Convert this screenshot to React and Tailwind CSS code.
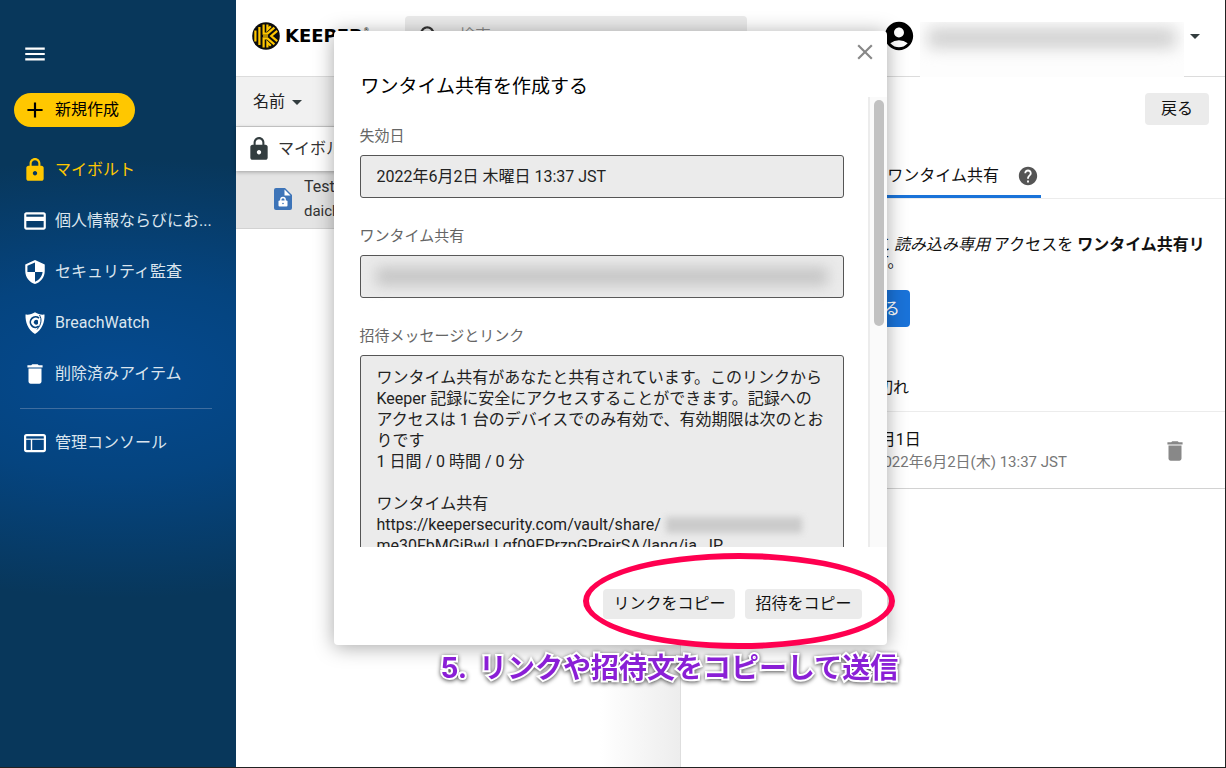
import React, { useState } from 'react';
import {
  MdAccountCircle,
  MdAdd,
  MdArrowDropDown,
  MdClose,
  MdCreditCard,
  MdDelete,
  MdHelp,
  MdLock,
  MdMenu,
  MdSearch,
  MdSecurity,
} from 'react-icons/md';

const MESSAGE = `ワンタイム共有があなたと共有されています。このリンクから
Keeper 記録に安全にアクセスすることができます。記録への
アクセスは 1 台のデバイスでのみ有効で、有効期限は次のとお
りです
1 日間 / 0 時間 / 0 分

ワンタイム共有
https://keepersecurity.com/vault/share/
me30FbMGjBwLLgf09EPrzpGPrejrSA/lang/ja_JP`;

const BreachWatchIcon = () => (
  <svg width="26" height="26" viewBox="0 0 26 26" aria-hidden="true">
    <path d="M3.5 4.5C7 5 10 4 13 2.2C16 4 19 5 22.5 4.5C22.8 12.5 20 19.5 13 24C6 19.5 3.2 12.5 3.5 4.5Z" fill="white" />
    <path d="M17 8.2A5.2 5.2 0 1 0 16.8 16.2" fill="none" stroke="#05437f" strokeWidth="1.7" />
    <path d="M17.5 5C20 9 19.5 14.5 15 19.5" fill="none" stroke="#05437f" strokeWidth="1" />
    <path d="M16 10.6A2.4 2.4 0 1 0 16 13.8" fill="#05437f" />
  </svg>
);

const ConsoleIcon = () => (
  <svg width="26" height="26" viewBox="0 0 26 26" fill="none" stroke="white" aria-hidden="true">
    <rect x="3.1" y="5.1" width="19.8" height="16" rx="1.5" strokeWidth="2.2" />
    <path d="M3 9.2H23" strokeWidth="1.2" />
    <path d="M9.5 9.2V21" strokeWidth="1.4" />
  </svg>
);

const FileLockIcon = () => (
  <svg width="18" height="22" viewBox="0 0 18 22" aria-hidden="true">
    <path d="M2 0H11L18 7V20A2 2 0 0 1 16 22H2A2 2 0 0 1 0 20V2A2 2 0 0 1 2 0Z" fill="#3d74b8" />
    <path d="M10.5 1.5V7.5H16.5Z" fill="white" />
    <rect x="4.5" y="12.5" width="9" height="6" rx="1" fill="white" />
    <path d="M6.8 13V11.7A2.2 2.2 0 0 1 11.2 11.7V13" fill="none" stroke="white" strokeWidth="1.3" />
    <circle cx="9" cy="15.5" r="0.8" fill="#3d74b8" />
  </svg>
);

const KeeperMark = () => (
  <svg width="28" height="28" viewBox="0 0 28 28" aria-hidden="true">
    <circle cx="14" cy="14" r="13.8" fill="#0d0d0d" />
    <g fill="none" stroke="#ffc700" strokeWidth="2.2">
      <path d="M3.4 8.5V19.5" />
      <path d="M7.4 5V23" />
      <path d="M11.6 2.6V11.6H15.4L22.4 5.6" />
      <path d="M11.6 25.4V16.4H15.4L22.4 22.4" />
      <path d="M15.4 2.6V7.6L18.8 4.2" />
      <path d="M15.4 25.4V20.4L18.8 23.8" />
      <path d="M25.2 8.8L19.2 14L25.2 19.2" />
      <path d="M11 14H16" strokeWidth="1.4" />
    </g>
  </svg>
);

const navItems = [
  { label: 'マイボルト', icon: <MdLock size={26} />, active: true },
  { label: '個人情報ならびにお...', icon: <MdCreditCard size={26} /> },
  { label: 'セキュリティ監査', icon: <MdSecurity size={26} /> },
  { label: 'BreachWatch', icon: <BreachWatchIcon /> },
  { label: '削除済みアイテム', icon: <MdDelete size={26} /> },
];

const NavLink = ({ label, icon, active }) => (
  <a
    href="#"
    className={`flex h-[51px] items-center gap-[7px] pl-[22px] whitespace-nowrap ${active ? 'text-[#ffc700]' : 'text-white'}`}
  >
    <span className="shrink-0">{icon}</span>
    <span className={active ? '' : 'text-[#dbe5ee]'}>{label}</span>
  </a>
);

const Sidebar = () => (
  <aside className="w-[236px] shrink-0 bg-[#08375b] bg-[radial-gradient(ellipse_440px_220px_at_50%_378px,#054a90_0%,#05447f_45%,#08375b_100%)] pt-[41px]">
    <button type="button" aria-label="メニュー" className="ml-[22px] block text-white">
      <MdMenu size={26} />
    </button>
    <button
      type="button"
      className="mt-[26px] ml-[14px] flex h-[34px] items-center gap-[7px] rounded-full bg-[#ffc700] pr-4 pl-2 text-black"
    >
      <MdAdd size={26} />
      新規作成
    </button>
    <nav className="mt-[17px]">
      {navItems.map((item) => (
        <NavLink key={item.label} {...item} />
      ))}
      <hr className="mt-[9px] mr-6 mb-2 ml-5 border-[#3f6d9f]" />
      <NavLink label="管理コンソール" icon={<ConsoleIcon />} />
    </nav>
  </aside>
);

const Header = () => (
  <header className="flex h-[77px] items-center border-b border-[#dcdcdc] pr-[18px] pb-1 pl-4">
    <div className="flex w-[153px] items-center gap-[5px]">
      <KeeperMark />
      <span className="font-['DejaVu_Sans'] text-[18px] leading-5 font-bold text-black">KEEPER</span>
      <span className="-ml-1 pb-3 text-[6px] leading-3">®</span>
    </div>
    <label className="flex h-[41px] w-[342px] items-center gap-4 rounded bg-[#ebebeb] px-3">
      <MdSearch size={26} className="shrink-0 text-[#333]" />
      <input type="search" aria-label="検索" placeholder="検索" className="min-w-0 flex-1 outline-none placeholder:text-[#888]" />
    </label>
    <div className="ml-auto flex items-center">
      <MdAccountCircle size={34} className="text-black" />
      <div className="mt-[1px] -mb-7 ml-1 h-[58px] w-[264px] overflow-hidden bg-[#fdfdfd] pt-[6px]">
        <div className="mx-2 h-5 rounded bg-[#cfcfcf] blur-[8px]" />
      </div>
      <button type="button" aria-label="アカウントメニュー" className="-ml-[1px] text-[#333d3f]">
        <MdArrowDropDown size={24} />
      </button>
    </div>
  </header>
);

const RecordList = () => (
  <section className="flex w-[445px] shrink-0 flex-col border-r border-[#dedede] bg-linear-to-r from-white from-82% to-[#ededed]">
    <div className="flex h-[50px] items-center border-b border-[#cfcfcf] bg-[#f1f1f1] pl-[17px]">
      <button type="button" className="flex items-center text-[#222]">
        名前
        <MdArrowDropDown size={24} className="text-[#333d3f]" />
      </button>
    </div>
    <div className="z-1 flex h-11 items-center gap-[6px] bg-white pl-[10px] text-[#333] shadow-[0_1px_4px_rgba(0,0,0,0.3)]">
      <MdLock size={26} className="text-[#333d3f]" />
      マイボルト
    </div>
    <div className="flex h-[58px] items-center gap-3 border-b border-[#d2d2d2] bg-[#e4e4e4] pb-[2px] pl-[38px] text-[#333]">
      <FileLockIcon />
      <div className="leading-6">
        <p>Test</p>
        <p className="text-[15px]">daichi</p>
      </div>
    </div>
  </section>
);

const Detail = ({ onCreate }) => (
  <section className="min-w-0 flex-1 bg-white text-[#111]">
    <div className="flex justify-end pt-4 pr-4">
      <button type="button" className="h-8 w-16 rounded bg-[#ebebeb]">
        戻る
      </button>
    </div>
    <div className="mt-7 flex h-[46px] border-b border-[#ececec]">
      <button type="button" className="ml-4 flex w-[344px] items-center justify-end gap-[18px] border-b-3 border-[#1a73d9] pt-[3px] pr-[2px]">
        ワンタイム共有
        <MdHelp size={22} className="text-[#555]" />
      </button>
    </div>
    <div className="overflow-hidden pt-[37px] pl-[17px] whitespace-nowrap">
      <p className="leading-[17px]">
        このボタンで相手の端末に <em>読み込み専用</em> アクセスを <strong>ワンタイム共有リ</strong>
        <br />
        ンクを使って許可できます。
      </p>
      <button type="button" onClick={onCreate} className="mt-5 h-[37px] rounded bg-[#1a73d9] px-[10px] text-white">
        ワンタイム共有を作成する
      </button>
    </div>
    <h3 className="mt-[49px] border-b border-[#ececec] pb-[11px] pl-[132px]">有効期限切れ</h3>
    <div className="flex items-center justify-between border-b border-[#d2d2d2] pt-4 pr-[37px] pb-[14px] pl-[134px]">
      <div className="leading-[23px]">
        <p>開始日: 6月1日</p>
        <p className="text-[15px] text-[#777]">有効期限2022年6月2日(木) 13:37 JST</p>
      </div>
      <button type="button" aria-label="削除" className="text-[#888]">
        <MdDelete size={26} />
      </button>
    </div>
  </section>
);

const ShareDialog = ({ onClose }) => (
  <div className="absolute inset-0 z-10 flex items-start justify-center pt-[31px] pr-[5px]">
    <div role="dialog" aria-labelledby="share-title" className="relative w-[553px] rounded bg-white shadow-[0_2px_20px_rgba(0,0,0,0.35)]">
      <button type="button" aria-label="閉じる" onClick={onClose} className="absolute top-2 right-[9px] text-[#888]">
        <MdClose size={26} />
      </button>
      <h2 id="share-title" className="pt-[46px] pl-[27px] text-[19px] leading-5 text-black">
        ワンタイム共有を作成する
      </h2>

      <div className="flex h-[450px] overflow-hidden">
        <div className="flex flex-1 flex-col gap-7 pt-[29px] pr-6 pl-[26px]">
          <div className="flex flex-col gap-[9px]">
            <label htmlFor="expires" className="text-[15px] leading-5 text-[#666]">
              失効日
            </label>
            <input
              id="expires"
              readOnly
              value="2022年6月2日 木曜日 13:37 JST"
              className="h-[43px] rounded-[3px] border border-[#555] bg-[#ebebeb] px-4 pb-[3px] text-[#222]"
            />
          </div>
          <div className="flex flex-col gap-[9px]">
            <label htmlFor="share-link" className="text-[15px] leading-5 text-[#666]">
              ワンタイム共有
            </label>
            <div className="relative">
              <input id="share-link" readOnly className="block h-[43px] w-full rounded-[3px] border border-[#555] bg-[#ebebeb] px-4" />
              <div className="absolute inset-x-4 inset-y-3 rounded bg-[#c6c6c6] blur-[7px]" />
            </div>
          </div>
          <div className="flex flex-col gap-[9px]">
            <label htmlFor="invite" className="text-[15px] leading-5 text-[#666]">
              招待メッセージとリンク
            </label>
            <div className="relative">
              <textarea
                id="invite"
                readOnly
                rows={11}
                value={MESSAGE}
                className="block w-full resize-none overflow-hidden rounded-[3px] border border-[#555] bg-[#ebebeb] py-[11px] pr-0 pl-4 leading-[21px] text-[#222]"
              />
              <div className="absolute top-[162px] left-[306px] h-4 w-[136px] bg-[#cbcbcb] blur-[3px]" />
            </div>
          </div>
        </div>
        <div className="w-[19px] border-l-2 border-[#ececec] bg-[#fafafa] pt-[3px] pl-1">
          <div className="h-[226px] w-[10px] rounded-full bg-[#c1c1c1]" />
        </div>
      </div>

      <div className="flex justify-end gap-[10px] pt-[42px] pr-[25px] pb-[26px] text-[#111]">
        <button type="button" className="h-[30px] rounded bg-[#ebebeb] px-[10px]">
          リンクをコピー
        </button>
        <button type="button" className="h-[30px] rounded bg-[#ebebeb] px-[10px]">
          招待をコピー
        </button>
      </div>

      {/* callout over the copy buttons */}
      <div className="pointer-events-none absolute top-[522px] left-[249px] h-24 w-[312px] rounded-[50%] border-[6px] border-[#ff0050]" />
      <p className="absolute top-[617px] left-[107px] flex gap-3 font-['Inter','Noto_Sans_CJK_JP',sans-serif] text-[28px] leading-10 font-bold whitespace-nowrap text-[#8a1fd6] drop-shadow-[0_1px_2px_rgba(0,0,0,0.7)] [-webkit-text-stroke:4px_white] [paint-order:stroke_fill]">
        <span>5.</span>
        <span>リンクや招待文をコピーして送信</span>
      </p>
    </div>
  </div>
);

export default function App() {
  const [open, setOpen] = useState(true);

  return (
    <div
      lang="ja"
      className="relative flex min-h-screen overflow-hidden border-r border-b border-[#222] bg-white font-['Roboto','Noto_Sans_CJK_JP',sans-serif] text-base"
    >
      <Sidebar />
      <main className="flex min-w-0 flex-1 flex-col">
        <Header />
        <div className="flex flex-1">
          <RecordList />
          <Detail onCreate={() => setOpen(true)} />
        </div>
      </main>
      {open && <ShareDialog onClose={() => setOpen(false)} />}
    </div>
  );
}
